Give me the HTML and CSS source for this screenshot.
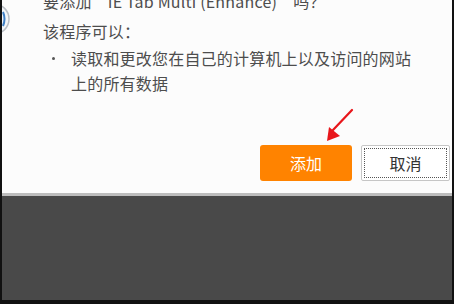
FILE: index.html
```html
<!DOCTYPE html>
<html lang="zh-CN">
<head>
    <meta charset="UTF-8">
    <meta name="viewport" content="width=device-width, initial-scale=1.0">
    <title>添加扩展程序</title>
    <link rel="stylesheet" href="styles.css">
</head>
<body>
    <div class="frame">
        <div class="dialog">
            <svg class="ext-icon" width="12" height="34" viewBox="0 0 12 34">
                <circle cx="-6" cy="17" r="15" fill="#f4f6f8" stroke="#b9bec4" stroke-width="1.5"/>
                <path d="M3 10 Q6 17 3 24" fill="none" stroke="#3f7fc4" stroke-width="2"/>
            </svg>
            <div class="content">
                <p class="title">要添加“IE Tab Multi (Enhance)”吗？</p>
                <p class="lead">该程序可以：</p>
                <ul class="perms">
                    <li><span class="dot"></span><span>读取和更改您在自己的计算机上以及访问的网站上的所有数据</span></li>
                </ul>
                <div class="actions">
                    <button class="btn btn-add" type="button">添加</button>
                    <button class="btn btn-cancel" type="button"><span class="focus">取消</span></button>
                </div>
            </div>
            <svg class="arrow" width="40" height="40" viewBox="0 0 40 40">
                <line x1="35" y1="4" x2="16" y2="24" stroke="#e8161b" stroke-width="2.2" stroke-linecap="round"/>
                <polygon points="10,35 12,21 23,30" fill="#e8161b"/>
            </svg>
        </div>
        <div class="shade"></div>
    </div>
</body>
</html>
```

FILE: styles.css
```css
body {
    margin: 0;
    padding: 0;
    background-color: #111;
    font-family: "Noto Sans CJK SC", "Noto Sans", sans-serif;
}

.frame {
    margin: 0 2px;
    height: 300px;
    display: flex;
    flex-direction: column;
}

.dialog {
    position: relative;
    height: 193px;
    background-color: #fcfcfc;
    overflow: hidden;
}

.ext-icon {
    position: absolute;
    left: -2px;
    top: 2px;
}

.content {
    margin-top: -14px;
    padding-left: 41px;
    color: #4d4d4d;
    font-size: 16px;
    letter-spacing: 0.2px;
}

.title,
.lead {
    margin: 0;
    line-height: 30px;
}

.perms {
    list-style: none;
    margin: 0;
    padding: 0;
    width: 372px;
}

.perms li {
    display: flex;
    line-height: 24.5px;
}

.dot {
    flex: none;
    width: 3px;
    height: 3px;
    margin: 11px 16px 0 9px;
    background-color: #555;
    border-radius: 50%;
}

.actions {
    display: flex;
    justify-content: flex-end;
    gap: 9px;
    margin-top: 50px;
    padding-right: 2px;
}

.btn {
    height: 36px;
    font-family: inherit;
    font-size: 16px;
    border-radius: 3px;
    padding: 0;
    cursor: pointer;
}

.btn-add {
    width: 92px;
    background-color: #ff8300;
    color: #fff;
    border: none;
}

.btn-cancel {
    width: 89px;
    background-color: #fff;
    color: #333;
    border: 1px solid #c6c6c6;
    border-radius: 2px;
    padding: 2px;
}

.btn-cancel .focus {
    display: flex;
    align-items: center;
    justify-content: center;
    height: 100%;
    box-sizing: border-box;
    border: 1px dotted #555;
}

.arrow {
    position: absolute;
    left: 315px;
    top: 106px;
}

.shade {
    flex: 1;
    border-top: 3px solid #bdbdbd;
    background-color: #494949;
}
```
